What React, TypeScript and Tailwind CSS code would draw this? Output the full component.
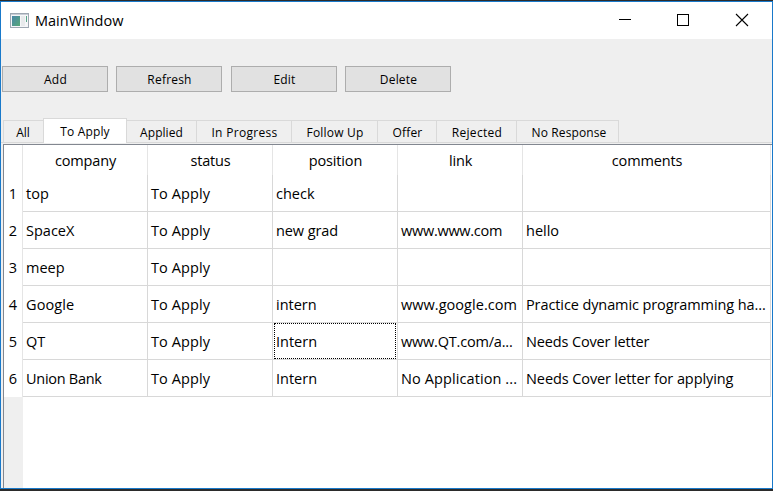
import React from "react";

const buttons = [
  { label: "Add", gap: "" },
  { label: "Refresh", gap: "ml-2" },
  { label: "Edit", gap: "ml-[9px]" },
  { label: "Delete", gap: "ml-2" },
];

const tabs = [
  { label: "All", width: "w-10", tracking: "pr-px" },
  { label: "To Apply", width: "w-[84px]", tracking: "tracking-[0.17px]" },
  { label: "Applied", width: "w-[69px]", tracking: "tracking-[0.05px]" },
  { label: "In Progress", width: "w-[95px]", tracking: "tracking-[0.3px] pl-px" },
  { label: "Follow Up", width: "w-[86px]", tracking: "tracking-[0.2px] pl-px" },
  { label: "Offer", width: "w-[59px]", tracking: "tracking-[0.15px] pl-px" },
  { label: "Rejected", width: "w-20", tracking: "tracking-[0.3px] pl-px" },
  { label: "No Response", width: "w-[103px]", tracking: "tracking-[0.12px] pl-[3px]" },
];

const columns = ["company", "status", "position", "link", "comments"];

const rows = [
  ["top", "To Apply", "check", "", ""],
  ["SpaceX", "To Apply", "new grad", "www.www.com", "hello"],
  ["meep", "To Apply", "", "", ""],
  ["Google", "To Apply", "intern", "www.google.com", "Practice dynamic programming ha..."],
  ["QT", "To Apply", "Intern", "www.QT.com/a...", "Needs Cover letter"],
  ["Union Bank", "To Apply", "Intern", "No Application ...", "Needs Cover letter for applying"],
];

const tracking: Record<string, string> = {
  "To Apply": "tracking-[0.1px]",
  "Google": "tracking-[0.1px]",
  "new grad": "tracking-[-0.08px]",
  "www.www.com": "tracking-[-0.27px]",
  "www.google.com": "tracking-[0.04px]",
  "www.QT.com/a...": "tracking-[-0.2px]",
  "Union Bank": "tracking-[-0.28px]",
  "No Application ...": "tracking-[0.1px]",
  "Needs Cover letter": "tracking-[-0.14px]",
  "Needs Cover letter for applying": "tracking-[-0.09px]",
  "Practice dynamic programming ha...": "tracking-[-0.1px]",
};

const grid = "grid grid-cols-[19px_125px_125px_125px_125px_248px]";

function TitleBar() {
  return (
    <header className="flex h-[37px] shrink-0 items-center bg-white pl-[9px]">
      <svg width="20" height="16" viewBox="0 0 20 16" shapeRendering="crispEdges">
        <defs>
          <linearGradient id="pane" x1="0" y1="0" x2="1" y2="1">
            <stop offset="0" stopColor="#4a86a8" />
            <stop offset="1" stopColor="#55a877" />
          </linearGradient>
        </defs>
        <rect x="0.5" y="0.5" width="18" height="14" fill="#f5f6f8" stroke="#9ea7b2" />
        <path d="M1 1.5h17" stroke="#c9ced6" />
        <rect x="2" y="3" width="8" height="10" fill="url(#pane)" />
        <rect x="11" y="3" width="4" height="10" fill="#e8eaec" />
        <rect x="16" y="3" width="1" height="6" fill="#58a589" />
      </svg>
      <span className="ml-[5px] text-[14.5px] leading-5">MainWindow</span>
      <div className="ml-auto flex h-full items-center">
        <svg width="46" height="37" viewBox="0 0 46 37" shapeRendering="crispEdges">
          <path d="M4 17.5h12" stroke="#000" />
        </svg>
        <svg width="58" height="37" viewBox="0 0 58 37" shapeRendering="crispEdges">
          <rect x="16.5" y="12.5" width="11" height="11" fill="none" stroke="#000" />
        </svg>
        <svg width="53" height="37" viewBox="0 0 53 37">
          <path d="M17 12l12 12M29 12L17 24" stroke="#000" strokeWidth="1.1" />
        </svg>
      </div>
    </header>
  );
}

function Toolbar() {
  return (
    <div className="mt-[27px] flex h-[26px] shrink-0 pl-px text-[12px]">
      {buttons.map((b) => (
        <button
          key={b.label}
          className={`flex w-[106px] items-center justify-center border border-[#adadad] bg-[#e1e1e1] pl-px pt-[2px] tracking-[0.2px] ${b.gap}`}
        >
          {b.label}
        </button>
      ))}
    </div>
  );
}

function TabBar() {
  return (
    <nav className="mt-[27px] flex h-6 shrink-0 items-end border-b border-[#d9d9d9] pl-[2px] text-[12px]">
      {tabs.map((t, i) => (
        <div
          key={t.label}
          className={`flex items-center justify-center whitespace-nowrap border-[#d9d9d9] pt-[2px] ${t.width} ${t.tracking} ${
            i === 1 ? "-mb-px h-[25px] border-x border-t bg-white" : "h-[22px] border-t"
          } ${i === 0 || i > 2 ? "border-l" : ""} ${i === 7 ? "border-r" : ""}`}
        >
          {t.label}
        </div>
      ))}
    </nav>
  );
}

function Table() {
  return (
    <main className="ml-[2px] mt-px flex flex-1 flex-col border-l border-t border-[#828790] bg-white text-[14.5px]">
      <div className={`${grid} h-[30px] shrink-0`}>
        <div className="border-r border-[#e5e5e5]" />
        {columns.map((c) => (
          <div
            key={c}
            className="flex items-center justify-center border-r border-[#e5e5e5] pl-px pt-px tracking-[-0.15px]"
          >
            {c}
          </div>
        ))}
      </div>
      {rows.map((r, i) => (
        <div key={i} className={`${grid} h-[37px] shrink-0`}>
          <div className="flex items-center justify-center border-r border-[#e5e5e5] pt-px">{i + 1}</div>
          {r.map((text, c) => (
            <div key={c} className="border-b border-r border-[#d8d8d8] pl-px pr-px">
              <div
                className={`flex h-full items-center whitespace-nowrap border pl-px pt-px ${
                  i === 4 && c === 2 ? "border-dotted border-black" : "border-transparent"
                } ${tracking[text] ?? ""}`}
              >
                {text}
              </div>
            </div>
          ))}
        </div>
      ))}
      <div className="w-[19px] flex-1 bg-[#efefef]" />
    </main>
  );
}

export default function App() {
  return (
    <div className="h-[491px] w-[773px] cursor-default overflow-hidden border-b-2 border-t border-[#2b2b2b] font-['Open_Sans','Noto_Sans',sans-serif] text-black">
      <div className="flex h-full flex-col border border-[#1979ca] bg-[#efefef]">
        <TitleBar />
        <Toolbar />
        <TabBar />
        <Table />
      </div>
    </div>
  );
}
